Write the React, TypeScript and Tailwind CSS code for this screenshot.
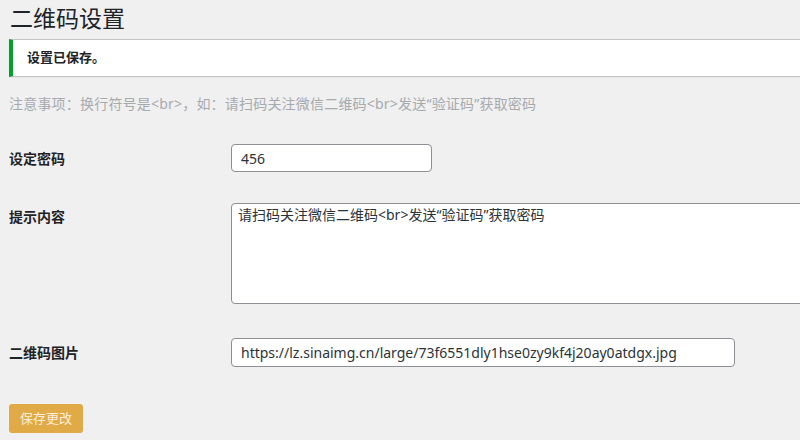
import React from "react";

const FONT = { fontFamily: '"Noto Sans", "Noto Sans CJK SC", sans-serif' };

export default function App() {
  return (
    <div className="w-[800px] h-[440px] overflow-hidden bg-[#f0f0f1] text-[#1d2327] pl-[9px]" style={FONT}>
      <h1 className="mt-[4px] ml-[1px] text-[23px] leading-[29px] font-normal text-[#1d2327]">二维码设置</h1>

      {/* notice */}
      <div className="mt-[6px] h-[38px] w-[820px] flex items-center bg-white border border-[#c3c4c7] border-l-4 border-l-[#00a32a] shadow-[0_1px_1px_rgba(0,0,0,0.04)] pl-[14px]">
        <p className="text-[13px] font-semibold">设置已保存。</p>
      </div>

      <p className="mt-[17px] text-[14px] leading-[20px] text-[#a7aaad] tracking-[0.2px]">
        注意事项：换行符号是&lt;br&gt;，如：请扫码关注微信二维码&lt;br&gt;发送“验证码”获取密码
      </p>

      <div className="mt-[30px] flex items-center">
        <label className="w-[222px] shrink-0 text-[14px] font-semibold">设定密码</label>
        <input
          defaultValue="456"
          className="w-[201px] h-[28px] bg-white border border-[#8c8f94] rounded-[4px] px-[9px] text-[14px] text-[#2c3338] outline-none"
          style={FONT}
        />
      </div>

      <div className="mt-[31px] flex items-start">
        <label className="w-[222px] shrink-0 pt-[4px] text-[14px] leading-[20px] font-semibold">提示内容</label>
        <textarea
          defaultValue="请扫码关注微信二维码<br>发送“验证码”获取密码"
          className="w-[600px] h-[101px] shrink-0 bg-white border border-[#8c8f94] rounded-[4px] px-[6px] py-[1px] text-[14px] leading-[20px] text-[#2c3338] outline-none resize-none"
          style={FONT}
        />
      </div>

      <div className="mt-[34px] flex items-center">
        <label className="w-[222px] shrink-0 text-[14px] font-semibold">二维码图片</label>
        <input
          defaultValue="https://lz.sinaimg.cn/large/73f6551dly1hse0zy9kf4j20ay0atdgx.jpg"
          className="w-[504px] h-[29px] bg-white border border-[#8c8f94] rounded-[4px] px-[9px] text-[14px] text-[#2c3338] outline-none"
          style={FONT}
        />
      </div>

      <button className="mt-[37px] w-[74px] h-[29px] rounded-[3px] bg-[#e0aa47] text-[13px] text-[#fbefd8]">
        保存更改
      </button>
    </div>
  );
}
